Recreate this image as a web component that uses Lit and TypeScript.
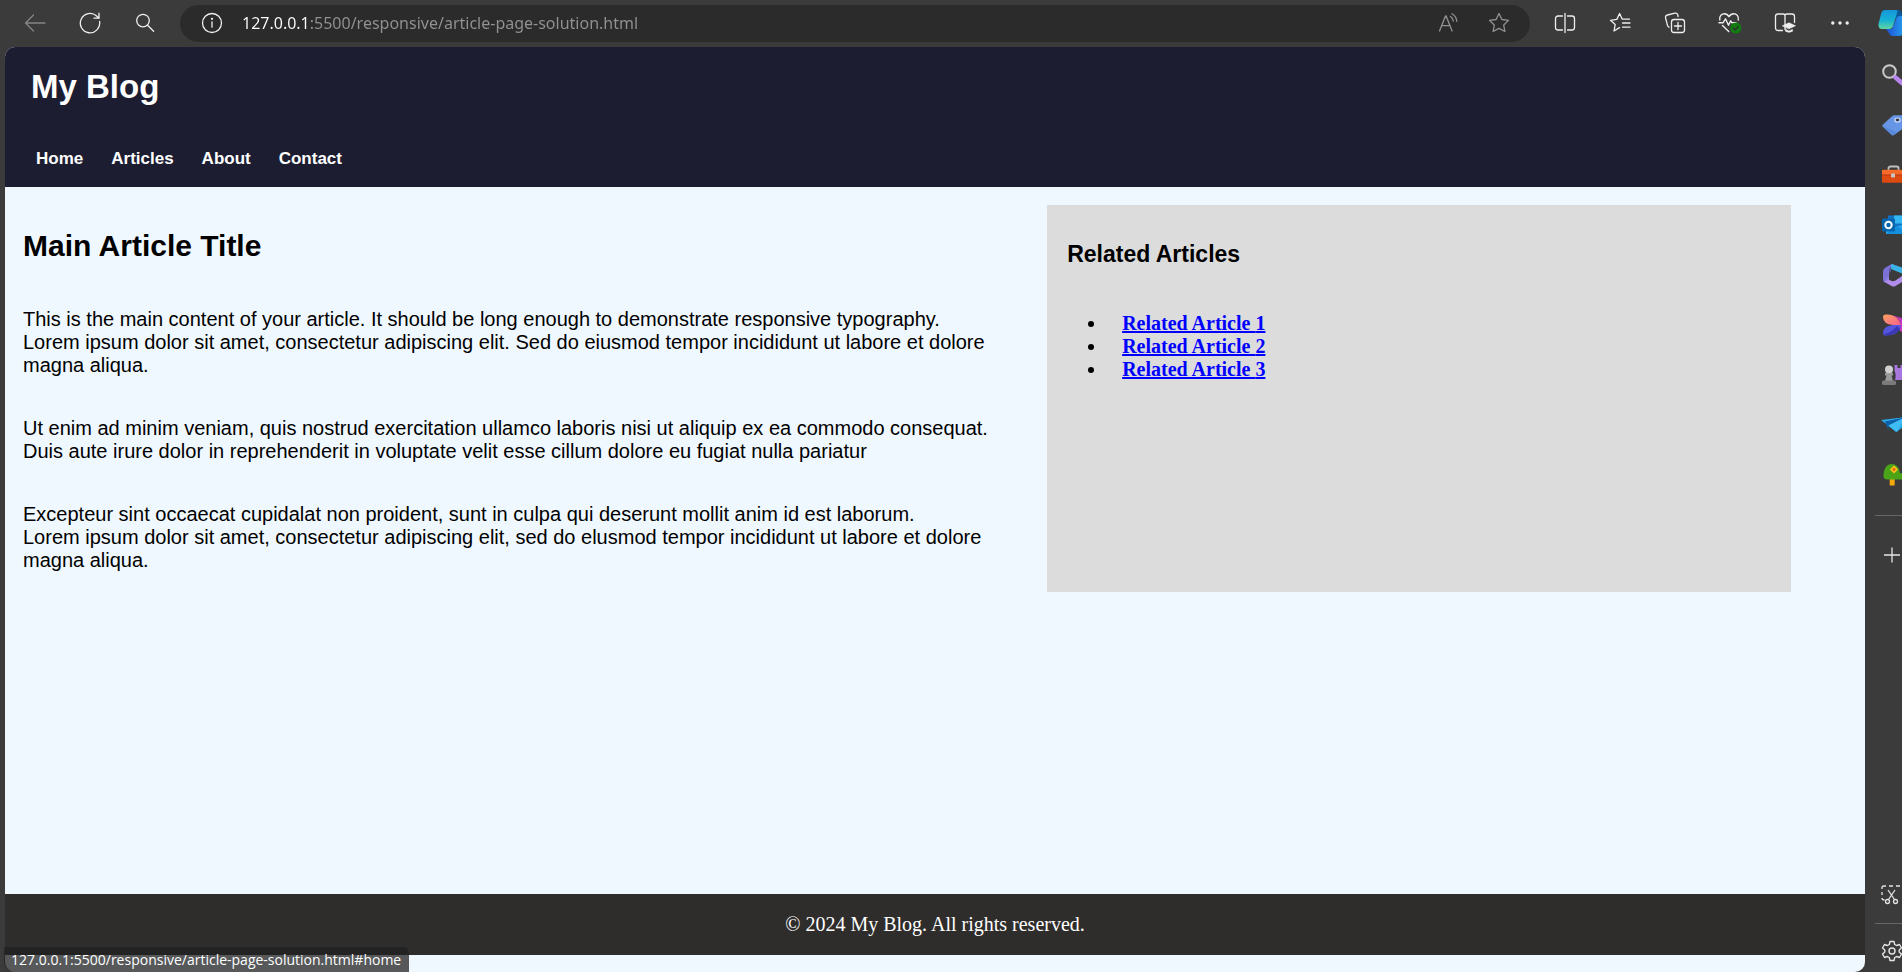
import { LitElement, html, css, svg } from "lit";
import { customElement, state } from "lit/decorators.js";

const line = (content: unknown, size = 22) => html`<svg width=${size} height=${size} viewBox="0 0 22 22" fill="none"
  stroke="currentColor" stroke-width="1.3" stroke-linecap="round" stroke-linejoin="round" aria-hidden="true">${content}</svg>`;

const art = (content: unknown) => html`<svg width="24" height="24" viewBox="0 0 24 24" aria-hidden="true">${content}</svg>`;

const icons = {
  back: line(svg`<path d="M21 11H1.5M9.5 3 1.5 11l8 8"/>`),
  reload: line(svg`<path d="M20.6 9.5A9.7 9.7 0 1 1 17.6 4L20 6.2M20 1.2v5h-5"/>`),
  search: line(svg`<circle cx="9" cy="8.6" r="6.3"/><path d="m13.6 13.2 6 6"/>`),
  info: line(svg`<circle cx="11" cy="11" r="9.5"/><path d="M11 9.8v5.4"/><circle cx="11" cy="6.8" r=".5" fill="currentColor"/>`),
  read: line(svg`<path d="m1.5 19 6-15h.6l6 15M3.7 13.6H12M12.5 4.5c1.6 1 2.6 2.500 2.800 4.500M14 1.800c2.700 1.500 4.400 4 4.800 7.500"/>`),
  star: line(svg`<path d="m11 1.500 2.900 6 6.600.9-4.800 4.600 1.200 6.500L11 16.400l-5.900 3.100L6.300 13 1.500 8.400l6.600-.9z"/>`),
  split: line(svg`<path d="M8.500 4H4a2.500 2.500 0 0 0-2.500 2.500v9A2.500 2.500 0 0 0 4 18h4.500M13.500 4H18a2.500 2.500 0 0 1 2.500 2.500v9A2.500 2.500 0 0 1 18 18h-4.500M11 1.500v19"/>`),
  favorites: line(svg`<path d="M10.500 15.600 5 19l1.200-6.400L1.500 8.300l6.300-.9L10.600 1.500l2.700 5.700H20.500M13.500 11h7.500M13.500 15.200h7.500"/>`),
  collections: line(svg`<rect x="7.500" y="7.500" width="13" height="13" rx="2.500"/><path d="M14 10.500v7M10.500 14h7M5 15.200a3 3 0 0 1-1.600-2L1.600 6a2.500 2.500 0 0 1 1.800-3L10.800 1.200a2.500 2.500 0 0 1 3 1.800l.3 1.500"/>`),
  health: html`<svg width="24" height="22" viewBox="0 0 24 22" fill="none" stroke="currentColor" stroke-width="1.4" stroke-linecap="round" stroke-linejoin="round" aria-hidden="true">
    <path d="M1.800 8C1 3.500 4 1.800 6.300 1.800c2 0 3.500 1 4.700 2.900 1.200-1.900 2.700-2.900 4.700-2.900C18.500 1.800 21 4 20.300 8M1 10.800h4l2.500-4 3 6.500 2.200-4.500 1.300 2h4M4.500 13.500l6.200 6"/>
    <circle cx="17.800" cy="16" r="5.600" fill="#107c10" stroke="none"/><path d="m15.300 16 1.800 1.900 3.300-3.500" stroke="#303030"/></svg>`,
  book: line(svg`<path d="M8.500 18.500H4a2.500 2.500 0 0 1-2.500-2.500V4.500A2.500 2.500 0 0 1 4 2h5q2 0 2 1.500v14M11 3.500Q11 2 13 2h5a2.500 2.500 0 0 1 2.500 2.500v6"/><path d="m8.500 13.800 6.500-3 6.500 3-6.500 3zM11.500 17.500v1.800q3.500 2 7 0v-1.800l-3.500 1.500z" fill="currentColor" stroke-width=".6"/>`),
  more: line(svg`<g fill="currentColor" stroke="none"><circle cx="3.800" cy="11" r="1.700"/><circle cx="11" cy="11" r="1.700"/><circle cx="18.200" cy="11" r="1.700"/></g>`),
  copilot: html`<svg width="36" height="28" viewBox="0 0 36 28" aria-hidden="true">
    <defs><linearGradient id="ca" x2="0" y2="1"><stop stop-color="#1696d8"/><stop offset=".55" stop-color="#17b3d4"/><stop offset="1" stop-color="#5fd6a0"/></linearGradient>
    <linearGradient id="cb" x2="1" y2="0"><stop stop-color="#1c4fd6"/><stop offset="1" stop-color="#28b4f4"/></linearGradient></defs>
    <path d="M16 1h5q2 0 3 3l1 4-9 2z" fill="#0a5a9c"/>
    <path d="M8 20h6L18 10q1-3 4-3h9l-6 17q-1 3-4 3h-7q-2 0-3-3z" fill="url(#cb)"/>
    <path d="M7 1h11q2 0 1 3l-4 13q-1 3-4 3H4q-4 0-3.500-5L3 5q1-4 4-4z" fill="url(#ca)"/></svg>`,
};

const apps = [
  { name: "Search", art: art(svg`<circle cx="8.500" cy="8.500" r="6.300" fill="#444" stroke="#c9c9c9" stroke-width="2"/><path d="m14.500 14.500 7 6" stroke="#b884ee" stroke-width="4.500" stroke-linecap="round"/>`) },
  { name: "Shopping", art: art(svg`<path d="M2 11.500 11 3.300q1-1 2.500-1H24V14l-11 8q-1.500 1-3-.5L2 14q-1.200-1.300 0-2.500z" fill="#6796e6"/><path d="m2 13 7.500 8q1.500 1.500 3 .5l3-2.300z" fill="#4c7bd0" opacity=".5"/><ellipse cx="16.500" cy="7" rx="2.600" ry="2" fill="#343b50" stroke="#d6e4ff" stroke-width="1.200"/>`) },
  { name: "Tools", art: art(svg`<path d="M7.500 8V5q0-1.500 2-1.500h6q2 0 2 1.500v3" fill="none" stroke="#bdbdbd" stroke-width="1.800"/><rect x="1" y="6.800" width="24" height="13" rx="1" fill="#dd4b12"/><path d="M1 7h24v5H1z" fill="#f36a2a"/><path d="M1 11.500h24v1H1z" fill="#b9370a"/><rect x="10" y="10.500" width="4" height="4" rx="1" fill="#c8c8c8"/>`) },
  { name: "Outlook", art: art(svg`<path d="M7 2.500h18v18H5l2-8z" fill="#1273c4"/><path d="M13 2.500h12v8H13z" fill="#35b8f1"/><path d="M5 14l9 0 10-3v10H5z" fill="#28a8ea"/><path d="m5 21 11-8 9 6v2z" fill="#1490df"/><rect x="1" y="5.500" width="13" height="13" rx="1.200" fill="#0565ae"/><circle cx="7.500" cy="12" r="3.200" fill="none" stroke="#fff" stroke-width="2"/>`) },
  { name: "Microsoft 365", art: art(svg`<path d="M10 1.500 4 5Q2 6.300 2 9v7q0 2 2 3.500l4-2V8q0-4 5-6.300-1.500-.9-3-.2z" fill="#8b82e0"/><path d="M2 9q0-2.700 2-4l6-3.500v7q-2 1-2 4l-6 7z" fill="#7065cf" opacity=".55"/><path d="M10 1.500q1.500-.8 3 .2l11 4v6L10 6z" fill="#3ab2e8"/><path d="m3.500 19 7 4q2 1 4 0L24 17v-6l-9.500 6.500q-2.500 1.500-5 0l-2-1z" fill="#b18bea"/>`) },
  { name: "Designer", art: html`<svg width="24" height="24" viewBox="0 0 24 24" aria-hidden="true">
    <defs><linearGradient id="da" x2="1" y2="1"><stop stop-color="#ffa25e"/><stop offset="1" stop-color="#f5618e"/></linearGradient></defs>
    <path d="M12 2.500Q19 6 20 12h4V6z" fill="#c936c4"/><path d="M18 11h6v9l-5-2z" fill="#c936c4"/>
    <path d="M2 4q0-2.500 3-2.500c8-.5 13 4 15 10.500H12Q2 11 2 4z" fill="url(#da)"/>
    <path d="M2 20q0-7 10-8h8l-1 4q-4 7-15 6.500-2 0-2-2.500z" fill="#5454dc"/><path d="M3 21q7-1 13-8l3 3q-4 6-14 6.500z" fill="#3b38b6"/></svg>` },
  { name: "Games", art: art(svg`<path d="M13.500 2h3v3h3V2H25v15H14q1.500-6-.5-9z" fill="#a877dd"/><circle cx="8" cy="6.500" r="4" fill="#d0d0d0"/><path d="M4 10h8v2.500h-1.500L12 18H4l1.500-5.500H4z" fill="#9b9b9b"/><rect x="1" y="17.500" width="14" height="4.500" rx="1.500" fill="#7b7b7b"/>`) },
  { name: "Drop", art: art(svg`<path d="M0 7 24 4v9L15 19z" fill="#29a9ea"/><path d="m4 8.500 20-4L7.500 12.500V18z" fill="#0c61a8"/><path d="m7.500 12.500 16-8L16 19z" fill="#3fbdf2"/>`) },
  { name: "Tree", art: art(svg`<rect x="8.700" y="15" width="5" height="7.500" rx=".6" fill="#f5aa0b"/><path d="M2.500 13C2.500 8 4 1 11 1c4.500 0 7 3.500 8 9l5 1v5.500H6.500q-4 0-4-3.500z" fill="#4ba318"/><path d="M13 3.500 16 6.500 13 9.500 10 6.500z" fill="#ffc21c" stroke="#ffc21c" stroke-width="1.500"/><circle cx="13" cy="6.500" r="1.400" fill="#e35c12"/>`) },
];

@customElement("browser-toolbar")
class BrowserToolbar extends LitElement {
  @state() private address = "127.0.0.1:5500/responsive/article-page-solution.html";

  static styles = css`
    :host { display: flex; align-items: center; height: 38px; padding: 0 0 0 7px; overflow: hidden; color: #eeeeee; }
    button { display: grid; place-items: center; flex: none; width: 55px; height: 36px; padding: 0; border: 0; background: none; color: inherit; }
    button:disabled { color: #858585; }
    svg { display: block; }
    .omnibox { flex: 1; display: flex; align-items: center; min-width: 0; height: 37px; box-sizing: border-box; margin: 0 7px 0 8px; padding: 0 6px 0 7px; border-radius: 19px; background: #2b2b2b; }
    .omnibox button { width: 50px; }
    .omnibox .muted { color: #929292; }
    .address { flex: 1; min-width: 0; height: 30px; padding: 0; margin-left: 5px; border: 0; outline: 0; font: 16px/30px "Noto Sans", sans-serif;
      color: transparent; background: linear-gradient(90deg, #ffffff 68px, #929292 68px); -webkit-background-clip: text; background-clip: text; }
    .copilot { width: 35px; justify-content: start; padding-left: 11px; }
  `;

  private tool(label: string, icon: unknown, cls = "tool") {
    return html`<button class=${cls} type="button" aria-label=${label}>${icon}</button>`;
  }

  render() {
    return html`
      <button type="button" aria-label="Back" disabled>${icons.back}</button>
      ${this.tool("Refresh", icons.reload)} ${this.tool("Search", icons.search)}
      <div class="omnibox">
        ${this.tool("Site information", icons.info)}
        <input class="address" type="text" aria-label="Address" spellcheck="false" .value=${this.address} />
        ${this.tool("Read aloud", icons.read, "muted")} ${this.tool("Add to favorites", icons.star, "muted")}
      </div>
      ${this.tool("Split screen", icons.split)} ${this.tool("Favorites", icons.favorites)}
      ${this.tool("Collections", icons.collections)} ${this.tool("Browser essentials", icons.health)}
      ${this.tool("Immersive reader", icons.book)} ${this.tool("Settings and more", icons.more)}
      ${this.tool("Copilot", icons.copilot, "copilot")}
    `;
  }
}

@customElement("browser-sidebar")
class BrowserSidebar extends LitElement {
  static styles = css`
    :host { display: flex; flex-direction: column; overflow: hidden; color: #e4e4e4; padding-top: 3px; box-sizing: border-box; }
    button { display: flex; align-items: center; flex: none; height: 50px; width: 50px; padding: 0 0 0 16px; border: 0; background: none; color: inherit; }
    svg { flex: none; }
    hr { flex: none; width: 100%; height: 1px; margin: 15px 0 14px 10px; border: 0; background: #686868; }
    .bottom { margin-top: auto; display: flex; flex-direction: column; }
    .bottom hr { margin: 4px 0 6px 10px; }
    .bottom button { height: 48px; }
    .bottom .settings { height: 42px; }
  `;

  render() {
    return html`
      ${apps.map((app) => html`<button type="button" aria-label=${app.name}>${app.art}</button>`)}
      <hr />
      <button type="button" aria-label="Customize">
        <svg width="22" height="22" viewBox="0 0 22 22" stroke="currentColor" stroke-width="1.300"><path d="M3 11h16M11 3.500v15"/></svg>
      </button>
      <div class="bottom">
        <button type="button" aria-label="Screenshot">
          <svg width="24" height="22" viewBox="0 0 24 22" fill="none" stroke="currentColor" stroke-width="1.300">
            <path d="M1 5V3.500Q1 2 3 2h2m3 0h4m3 0h4m2 0h3M1 8v3m0 3q0 2 2.500 2"/><path d="m7 6 6.500 9.500M14 6 7.500 15.500"/><circle cx="6.500" cy="17.500" r="2"/><circle cx="14.500" cy="17.500" r="2"/></svg>
        </button>
        <hr />
        <button class="settings" type="button" aria-label="Settings">
          <svg width="22" height="22" viewBox="0 0 22 22" fill="none" stroke="currentColor" stroke-width="1.400" stroke-linejoin="round">
            <path d="m9 1.500h4l.7 3 1.800 1 3-1 2 3.500-2.300 2v2l2.300 2-2 3.500-3-1-1.800 1-.7 3H9l-.7-3-1.800-1-3 1L1.500 14l2.300-2v-2L1.500 8l2-3.500 3 1 1.800-1z"/><circle cx="11" cy="11" r="3"/></svg>
        </button>
      </div>
    `;
  }
}

@customElement("blog-page")
class BlogPage extends LitElement {
  static styles = css`
    :host { display: flex; flex-direction: column; box-sizing: border-box; padding-bottom: 17px; overflow: hidden; background: #f0f8ff; color: #000000; font: 20px/23px "Liberation Sans", Arial, sans-serif; }
    h1, h2, h3, p, ul { margin: 0; }
    header { display: grid; gap: 42px; padding: 20px 26px 18px; background: #1d1d32; color: #ffffff; }
    h1 { font-size: 33px; line-height: 40px; }
    nav { display: flex; gap: 28px; padding-left: 5px; font-size: 17px; line-height: 20px; font-weight: bold; }
    nav a { color: inherit; text-decoration: none; }
    main { flex: 1; display: flex; align-items: flex-start; padding: 18px 0 18px 18px; }
    .row { flex: 1; display: flex; }
    article { flex: 0 0 55.6%; box-sizing: border-box; display: grid; gap: 40px; padding: 24px 50px 20px 0; }
    h2 { font-size: 30px; line-height: 34px; padding-bottom: 5px; }
    aside { flex: 0 0 40.4%; box-sizing: border-box; padding: 36px 20px; background: #dcdcdc; }
    h3 { font-size: 23px; line-height: 26px; }
    ul { padding: 45px 0 0 40px; font-family: "Liberation Serif", "Times New Roman", serif; }
    li a { margin-left: 15px; color: #0000ff; font-weight: bold; }
    footer { padding: 19px; text-align: center; background: #2f2d2c; color: #ffffff; font-family: "Liberation Serif", "Times New Roman", serif; }
  `;

  render() {
    return html`
      <header>
        <h1>My Blog</h1>
        <nav>
          ${["Home", "Articles", "About", "Contact"].map((n) => html`<a href="#${n.toLowerCase()}">${n}</a>`)}
        </nav>
      </header>
      <main>
        <div class="row">
          <article>
            <h2>Main Article Title</h2>
            <p>This is the main content of your article. It should be long enough to demonstrate responsive typography. Lorem ipsum dolor sit amet, consectetur adipiscing elit. Sed do eiusmod tempor incididunt ut labore et dolore magna aliqua.</p>
            <p>Ut enim ad minim veniam, quis nostrud exercitation ullamco laboris nisi ut aliquip ex ea commodo consequat. Duis aute irure dolor in reprehenderit in voluptate velit esse cillum dolore eu fugiat nulla pariatur</p>
            <p>Excepteur sint occaecat cupidalat non proident, sunt in culpa qui deserunt mollit anim id est laborum.<br />Lorem ipsum dolor sit amet, consectetur adipiscing elit, sed do elusmod tempor incididunt ut labore et dolore magna aliqua.</p>
          </article>
          <aside>
            <h3>Related Articles</h3>
            <ul>
              ${[1, 2, 3].map((n) => html`<li><a href="#related-${n}">Related Article ${n}</a></li>`)}
            </ul>
          </aside>
        </div>
      </main>
      <footer>© 2024 My Blog. All rights reserved.</footer>
    `;
  }
}

@customElement("app-root")
class AppRoot extends LitElement {
  static styles = css`
    :host { display: grid; grid-template: auto 1fr / 1fr 37px; min-height: 100vh; background: #3b3b3b; overflow: hidden; }
    browser-toolbar { grid-column: 1 / -1; padding-top: 4px; padding-bottom: 5px; }
    blog-page { margin-left: 5px; border-radius: 10px; }
    .view { position: relative; display: grid; }
    .status { position: absolute; left: 4px; bottom: 0; padding: 2px 8px 1px 7px; border-radius: 0 6px 0 10px; background: rgba(32, 32, 32, 0.74); color: #ffffff; font: 14px/22px "Open Sans", sans-serif; white-space: nowrap; }
  `;

  render() {
    return html`
      <browser-toolbar></browser-toolbar>
      <div class="view">
        <blog-page></blog-page>
        <div class="status" role="status">127.0.0.1:5500/responsive/article-page-solution.html#home</div>
      </div>
      <browser-sidebar></browser-sidebar>
    `;
  }
}
